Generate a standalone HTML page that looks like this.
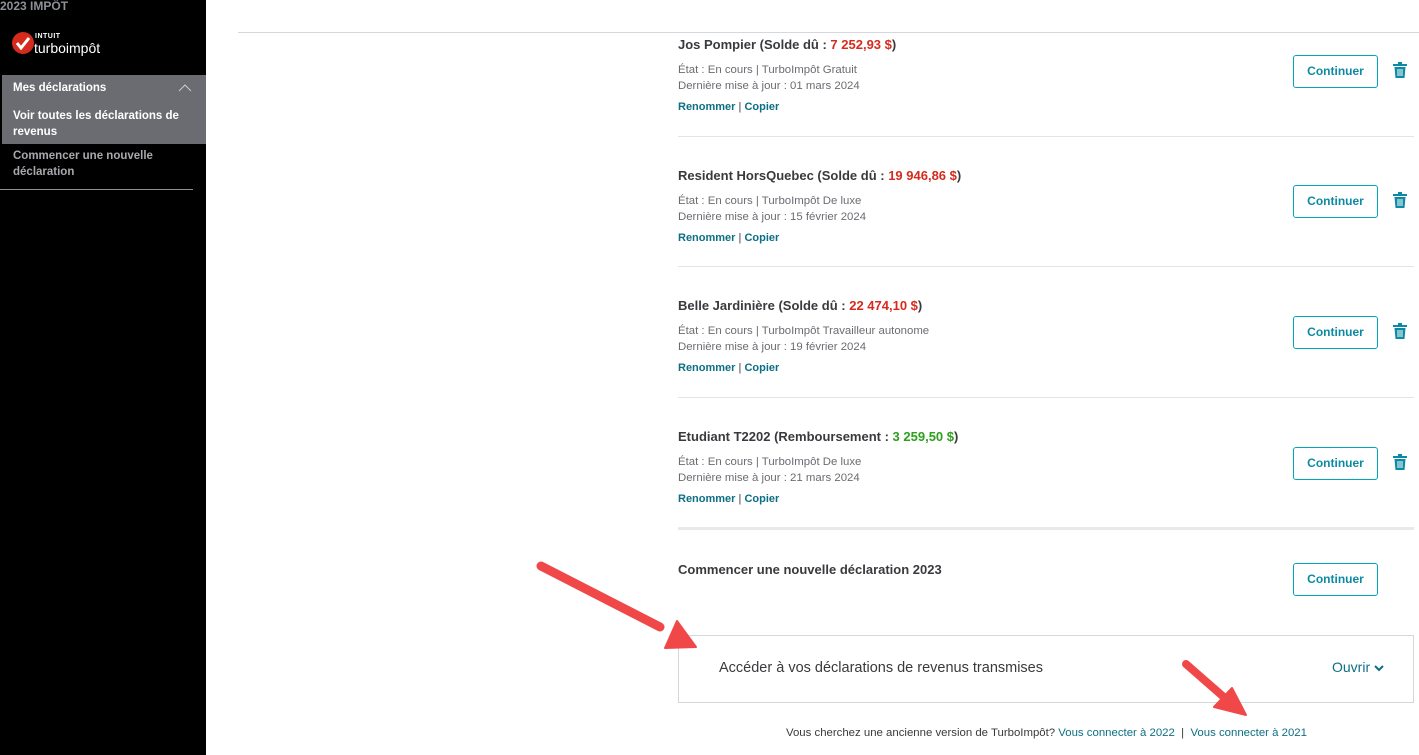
<!DOCTYPE html>
<html><head><meta charset="utf-8"><style>
*{margin:0;padding:0;box-sizing:border-box}
body{width:1419px;height:755px;overflow:hidden;background:#fff;font-family:"Liberation Sans",sans-serif;position:relative}
.side{position:absolute;left:0;top:0;width:206px;height:755px;background:#000}
.abs{position:absolute}
.row{position:absolute;left:678px;width:736px}
.t{font-size:13px;font-weight:bold;color:#393a3d}
.red{color:#d52b1e}.grn{color:#2ca01c}
.s{font-size:11.4px;color:#6b6c72;line-height:16px}
.l{font-size:11px;font-weight:bold;color:#0d6f84}
.btn{position:absolute;left:1293px;width:85px;height:33px;border:1px solid #00a6bf;border-radius:3px;color:#0d8aa3;font-size:12px;font-weight:bold;text-align:center;line-height:31px}
.sep{position:absolute;left:678px;width:736px;height:1px;background:#e3e4e6}
</style></head><body>
<div class="side">
<div class="abs" style="left:0;top:-1px;color:#8d9096;font-size:12px;font-weight:bold">2023 IMPÔT</div>
<svg class="abs" style="left:12px;top:32px" width="22" height="22"><circle cx="11" cy="11" r="11" fill="#d52b1e"/><path d="M5 11l4 5 8-10" stroke="#fff" stroke-width="3" fill="none"/></svg>
<div class="abs" style="left:35px;top:33px;color:#fff;font-size:7px;font-weight:bold;letter-spacing:.5px">INTUIT</div>
<div class="abs" style="left:34px;top:40px;color:#fff;font-size:14px">turboimpôt</div>
<div class="abs" style="left:2px;top:75px;width:204px;height:69px;background:#6b6c72"></div>
<div class="abs" style="left:13px;top:82px;color:#fff;font-size:11.5px;font-weight:bold">Mes déclarations</div>
<svg class="abs" style="left:178px;top:84px" width="14" height="8"><path d="M1 7l6-6 6 6" stroke="#ccc" fill="none"/></svg>
<div class="abs" style="left:13px;top:108px;width:180px;color:#fff;font-size:11.5px;font-weight:bold;line-height:16px">Voir toutes les déclarations de revenus</div>
<div class="abs" style="left:13px;top:148px;width:180px;color:#a8a9ad;font-size:11.5px;font-weight:bold;line-height:16px">Commencer une nouvelle déclaration</div>
<div class="abs" style="left:0;top:189px;width:193px;height:1px;background:#8d9096"></div>
</div>
<div class="abs" style="left:238px;top:32px;width:1181px;height:1px;background:#d4d7dc"></div>

<div class="row" style="top:37px"><div class="t">Jos Pompier (Solde dû : <span class="red">7 252,93 $</span>)</div><div class="s" style="margin-top:10px">État : En cours | TurboImpôt Gratuit<br>Dernière mise à jour : 01 mars 2024</div><div class="l" style="margin-top:7px">Renommer <span style="color:#393a3d;font-weight:normal">|</span> Copier</div></div>
<div class="btn" style="top:55px">Continuer</div>
<div class="sep" style="top:136px"></div>

<div class="row" style="top:168px"><div class="t">Resident HorsQuebec (Solde dû : <span class="red">19 946,86 $</span>)</div><div class="s" style="margin-top:10px">État : En cours | TurboImpôt De luxe<br>Dernière mise à jour : 15 février 2024</div><div class="l" style="margin-top:7px">Renommer <span style="color:#393a3d;font-weight:normal">|</span> Copier</div></div>
<div class="btn" style="top:185px">Continuer</div>
<div class="sep" style="top:266px"></div>

<div class="row" style="top:298px"><div class="t">Belle Jardinière (Solde dû : <span class="red">22 474,10 $</span>)</div><div class="s" style="margin-top:10px">État : En cours | TurboImpôt Travailleur autonome<br>Dernière mise à jour : 19 février 2024</div><div class="l" style="margin-top:7px">Renommer <span style="color:#393a3d;font-weight:normal">|</span> Copier</div></div>
<div class="btn" style="top:316px">Continuer</div>
<div class="sep" style="top:397px"></div>

<div class="row" style="top:429px"><div class="t">Etudiant T2202 (Remboursement : <span class="grn">3 259,50 $</span>)</div><div class="s" style="margin-top:10px">État : En cours | TurboImpôt De luxe<br>Dernière mise à jour : 21 mars 2024</div><div class="l" style="margin-top:7px">Renommer <span style="color:#393a3d;font-weight:normal">|</span> Copier</div></div>
<div class="btn" style="top:447px">Continuer</div>
<div class="sep" style="top:527px;height:3px;background:#e8e9eb"></div>

<div class="row t" style="top:562px">Commencer une nouvelle déclaration 2023</div>
<div class="btn" style="top:563px">Continuer</div>

<svg class="abs" style="left:1393px;top:62px" width="14" height="16"><g fill="#0d8aa3"><rect x="5" y="0" width="4" height="2"/><rect x="0" y="2" width="14" height="2"/><path d="M1.5 5h11l-1 11h-9z"/></g><g stroke="#fff" stroke-width="1"><path d="M5 7v7M7 7v7M9 7v7"/></g></svg>
<svg class="abs" style="left:1393px;top:192px" width="14" height="16"><g fill="#0d8aa3"><rect x="5" y="0" width="4" height="2"/><rect x="0" y="2" width="14" height="2"/><path d="M1.5 5h11l-1 11h-9z"/></g><g stroke="#fff" stroke-width="1"><path d="M5 7v7M7 7v7M9 7v7"/></g></svg>
<svg class="abs" style="left:1393px;top:323px" width="14" height="16"><g fill="#0d8aa3"><rect x="5" y="0" width="4" height="2"/><rect x="0" y="2" width="14" height="2"/><path d="M1.5 5h11l-1 11h-9z"/></g><g stroke="#fff" stroke-width="1"><path d="M5 7v7M7 7v7M9 7v7"/></g></svg>
<svg class="abs" style="left:1393px;top:454px" width="14" height="16"><g fill="#0d8aa3"><rect x="5" y="0" width="4" height="2"/><rect x="0" y="2" width="14" height="2"/><path d="M1.5 5h11l-1 11h-9z"/></g><g stroke="#fff" stroke-width="1"><path d="M5 7v7M7 7v7M9 7v7"/></g></svg>

<div class="abs" style="left:678px;top:635px;width:736px;height:68px;border:1px solid #d4d7dc"></div>
<div class="abs" style="left:719px;top:660px;font-size:14.5px;color:#393a3d">Accéder à vos déclarations de revenus transmises</div>
<div class="abs" style="left:1332px;top:659px;font-size:14px;color:#0d6f84">Ouvrir <svg width="10" height="8"><path d="M1 2l4 4 4-4" stroke="#0d6f84" stroke-width="2" fill="none"/></svg></div>
<div class="abs" style="left:786px;top:727px;font-size:11.4px;color:#393a3d">Vous cherchez une ancienne version de TurboImpôt? <span style="color:#0d6f84">Vous connecter à 2022</span> &nbsp;|&nbsp; <span style="color:#0d6f84">Vous connecter à 2021</span></div>

<svg class="abs" style="left:0;top:0" width="1419" height="755">
<g fill="#f04848" stroke="#f04848" stroke-linecap="round">
<line x1="541" y1="566" x2="660" y2="627" stroke-width="9"/>
<polygon points="677,621 696,647 665,648" stroke-width="2" stroke-linejoin="round"/>
<line x1="1186" y1="664" x2="1226" y2="699" stroke-width="8"/>
<polygon points="1232,688 1246,715 1214,707" stroke-width="2" stroke-linejoin="round"/>
</g></svg>
</body></html>
